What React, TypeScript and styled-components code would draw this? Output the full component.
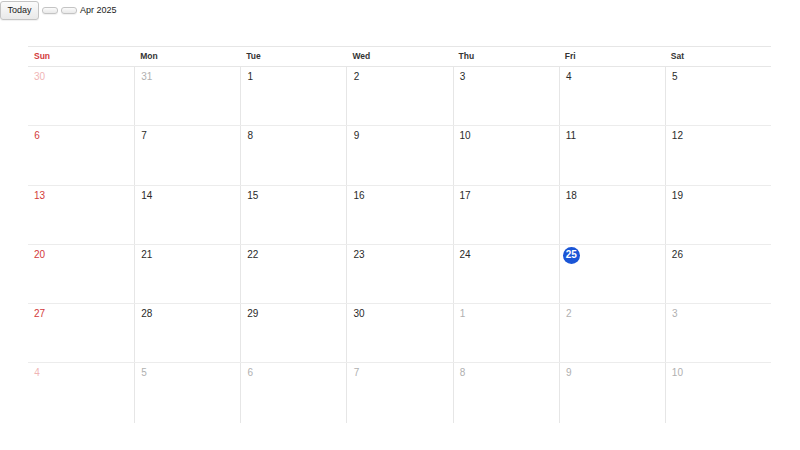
import React from 'react';
import styled, { createGlobalStyle } from 'styled-components';

const GlobalStyle = createGlobalStyle`
  html, body { margin: 0; padding: 0; background: #fff; }
  body { font-family: "Liberation Sans", Arial, sans-serif; color: #222; }
`;

const Toolbar = styled.div`
  display: flex; align-items: center; height: 20px;
`;
const ToolBtn = styled.button`
  font-family: "Liberation Sans", Arial, sans-serif; font-size: 9px; color: #222;
  margin: 0; box-sizing: border-box;
  background: linear-gradient(#fbfbfb, #e9e9e9);
  border: 1px solid #c4c4c4; border-radius: 3px;
  box-shadow: 0 1px 1px rgba(0,0,0,0.06);
`;
const TodayBtn = styled(ToolBtn)`
  height: 19px; padding: 0 6px; width: 39px;
`;
const NavBtn = styled(ToolBtn)`
  width: 16px; height: 7px; padding: 0; margin-left: 3px;
`;
const Title = styled.span`
  font-size: 9px; color: #222; margin-left: 3px;
`;

const Calendar = styled.div`
  margin: 26px 29px 0 28px;
`;
const Grid = styled.div`
  display: grid; grid-template-columns: repeat(7, 1fr);
`;
const HeadRow = styled(Grid)`
  height: 21px; box-sizing: border-box;
  border-top: 1px solid #e6e6e6; border-bottom: 1px solid #e6e6e6;
`;
const HeadCell = styled.div<{ $sun?: boolean }>`
  font-size: 8.5px; font-weight: 700; padding-left: 6px; line-height: 19px;
  color: ${p => (p.$sun ? '#d33a3a' : '#333')};
`;
const Week = styled(Grid)<{ $last?: boolean }>`
  height: 59.3px; box-sizing: border-box;
  border-bottom: ${p => (p.$last ? 'none' : '1px solid #ececec')};
`;
const Cell = styled.div<{ $first?: boolean }>`
  border-left: ${p => (p.$first ? 'none' : '1px solid #e6e6e6')};
  padding: 2px 0 0 6px; font-size: 10px; line-height: 1;
`;
const DayNum = styled.div<{ $sun?: boolean; $out?: boolean; $today?: boolean }>`
  display: flex; align-items: center; justify-content: center;
  width: fit-content; min-width: 6px; height: 16px; font-size: 10px;
  color: ${p =>
    p.$today ? '#fff' : p.$sun ? (p.$out ? '#f0b5b5' : '#d33a3a') : p.$out ? '#b0b0b0' : '#2a2a2a'};
  ${p =>
    p.$today &&
    `background:#1a55d6; border-radius:50%; width:17px; height:17px; font-weight:700; margin:0 0 0 -3px;`}
`;

const DAYS = ['Sun', 'Mon', 'Tue', 'Wed', 'Thu', 'Fri', 'Sat'];

const buildWeeks = () => {
  const cells: { d: number; out: boolean }[] = [];
  cells.push({ d: 30, out: true }, { d: 31, out: true });
  for (let i = 1; i <= 30; i++) cells.push({ d: i, out: false });
  let n = 1;
  while (cells.length < 42) cells.push({ d: n++, out: true });
  const weeks = [];
  for (let w = 0; w < 6; w++) weeks.push(cells.slice(w * 7, w * 7 + 7));
  return weeks;
};

export default function App() {
  const weeks = buildWeeks();
  return (
    <>
      <GlobalStyle />
      <Toolbar>
        <TodayBtn>Today</TodayBtn>
        <NavBtn />
        <NavBtn />
        <Title>Apr 2025</Title>
      </Toolbar>
      <Calendar>
        <HeadRow>
          {DAYS.map((d, i) => (
            <HeadCell key={d} $sun={i === 0}>{d}</HeadCell>
          ))}
        </HeadRow>
        {weeks.map((w, wi) => (
          <Week key={wi} $last={wi === weeks.length - 1}>
            {w.map((c, ci) => (
              <Cell key={ci} $first={ci === 0}>
                <DayNum $sun={ci === 0} $out={c.out} $today={!c.out && c.d === 25}>
                  {c.d}
                </DayNum>
              </Cell>
            ))}
          </Week>
        ))}
      </Calendar>
    </>
  );
}
